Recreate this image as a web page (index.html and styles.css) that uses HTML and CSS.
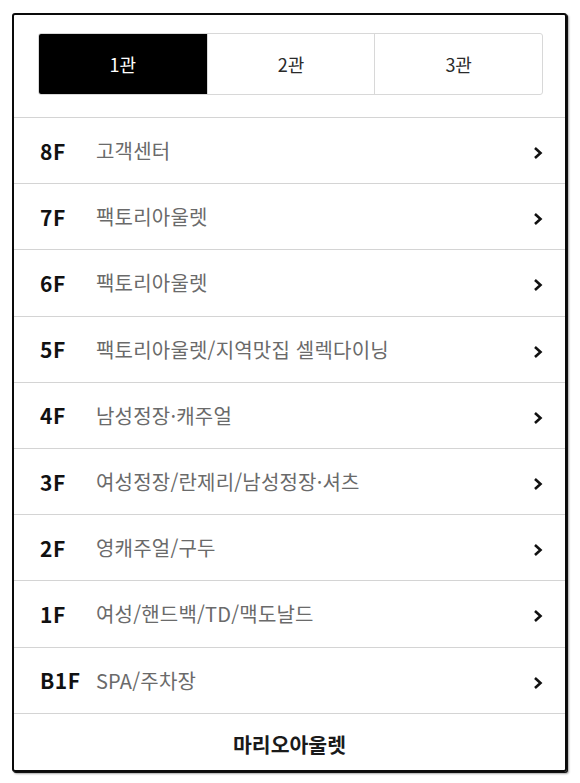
FILE: index.html
```html
<!DOCTYPE html>
<html lang="ko">
<head>
<meta charset="utf-8">
<title>층별안내</title>
<link rel="stylesheet" href="styles.css">
</head>
<body>
<div class="frame">
  <div class="tabs-wrap">
    <div class="tabs">
      <div class="tab active">1관</div>
      <div class="tab">2관</div>
      <div class="tab">3관</div>
    </div>
  </div>
  <ul class="floors">
    <li class="row"><span class="fl">8F</span><span class="desc">고객센터</span><svg class="chev" viewBox="0 0 10 14" width="10" height="14"><path d="M2 2 L7.5 7 L2 12" fill="none" stroke="#111" stroke-width="2.6"/></svg></li>
    <li class="row"><span class="fl">7F</span><span class="desc">팩토리아울렛</span><svg class="chev" viewBox="0 0 10 14" width="10" height="14"><path d="M2 2 L7.5 7 L2 12" fill="none" stroke="#111" stroke-width="2.6"/></svg></li>
    <li class="row"><span class="fl">6F</span><span class="desc">팩토리아울렛</span><svg class="chev" viewBox="0 0 10 14" width="10" height="14"><path d="M2 2 L7.5 7 L2 12" fill="none" stroke="#111" stroke-width="2.6"/></svg></li>
    <li class="row"><span class="fl">5F</span><span class="desc">팩토리아울렛/지역맛집 셀렉다이닝</span><svg class="chev" viewBox="0 0 10 14" width="10" height="14"><path d="M2 2 L7.5 7 L2 12" fill="none" stroke="#111" stroke-width="2.6"/></svg></li>
    <li class="row"><span class="fl">4F</span><span class="desc">남성정장·캐주얼</span><svg class="chev" viewBox="0 0 10 14" width="10" height="14"><path d="M2 2 L7.5 7 L2 12" fill="none" stroke="#111" stroke-width="2.6"/></svg></li>
    <li class="row"><span class="fl">3F</span><span class="desc">여성정장/란제리/남성정장·셔츠</span><svg class="chev" viewBox="0 0 10 14" width="10" height="14"><path d="M2 2 L7.5 7 L2 12" fill="none" stroke="#111" stroke-width="2.6"/></svg></li>
    <li class="row"><span class="fl">2F</span><span class="desc">영캐주얼/구두</span><svg class="chev" viewBox="0 0 10 14" width="10" height="14"><path d="M2 2 L7.5 7 L2 12" fill="none" stroke="#111" stroke-width="2.6"/></svg></li>
    <li class="row"><span class="fl">1F</span><span class="desc">여성/핸드백/TD/맥도날드</span><svg class="chev" viewBox="0 0 10 14" width="10" height="14"><path d="M2 2 L7.5 7 L2 12" fill="none" stroke="#111" stroke-width="2.6"/></svg></li>
    <li class="row"><span class="fl">B1F</span><span class="desc">SPA/주차장</span><svg class="chev" viewBox="0 0 10 14" width="10" height="14"><path d="M2 2 L7.5 7 L2 12" fill="none" stroke="#111" stroke-width="2.6"/></svg></li>
  </ul>
  <div class="footer">마리오아울렛</div>
</div>
</body>
</html>
```

FILE: styles.css
```css
* { box-sizing: border-box; }
html, body { margin: 0; padding: 0; background: #fff; }
body {
  font-family: "Noto Sans CJK KR", "Noto Sans", sans-serif;
  color: #111;
  width: 580px;
  height: 783px;
  overflow: hidden;
}
.frame {
  margin: 13px 0 0 12px;
  width: 555px;
  height: 759px;
  border: 2px solid #0a0a0a;
  border-radius: 3px;
  box-shadow: 1px 1px 0 #111, 2px 2px 2px rgba(0,0,0,0.35);
  display: flex;
  flex-direction: column;
  overflow: hidden;
}
.tabs-wrap {
  padding: 18px 22px 22px 24px;
  border-bottom: 1px solid #d4d4d4;
}
.tabs {
  display: grid;
  grid-template-columns: 1fr 1fr 1fr;
  height: 62px;
  border: 1px solid #d8d8d8;
  border-radius: 3px;
  overflow: hidden;
}
.tab {
  display: flex;
  align-items: center;
  justify-content: center;
  font-size: 18px;
  color: #2a2a2a;
  border-left: 1px solid #d8d8d8;
}
.tab:first-child { border-left: none; }
.tab.active { background: #000; color: #fff; }
.floors { list-style: none; margin: 0; padding: 0; }
.row {
  display: flex;
  align-items: center;
  height: 66.2px;
  padding: 0 22px 0 26px;
  border-bottom: 1px solid #d4d4d4;
}
.fl {
  width: 56px;
  flex: none;
  font-size: 21px;
  font-weight: 700;
  letter-spacing: 0.5px;
  color: #111;
}
.desc {
  flex: 1;
  font-size: 20px;
  color: #6a6a6a;
  letter-spacing: 0.2px;
}
.chev { flex: none; margin-top: 5px; }
.footer {
  flex: 1;
  display: flex;
  align-items: center;
  justify-content: center;
  font-size: 20.5px;
  font-weight: 700;
  color: #1a1a1a;
  padding-top: 4px;
}
```
